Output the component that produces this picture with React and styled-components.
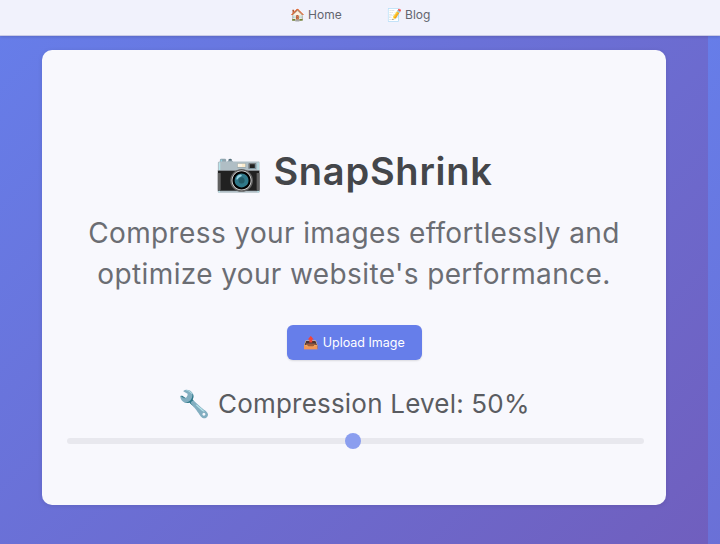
import React from 'react'
import styled, { createGlobalStyle } from 'styled-components'

const Global = createGlobalStyle`
  html, body {
    margin: 0;
    padding: 0;
  }
  body {
    height: 544px;
    overflow: hidden;
    font-family: "Inter", "Noto Sans", sans-serif;
    background: linear-gradient(135deg, #667eea 0%, #764ba2 100%) 0 0 / 708px 1340px repeat-x;
  }
`

const Nav = styled.nav`
  height: 36px;
  background: #f1f2fc;
  border-bottom: 1px solid #c9cbe6;
  box-shadow: 0 1px 3px rgba(0, 0, 0, 0.15);
  display: flex;
  justify-content: center;
  align-items: center;
  gap: 45px;
  padding-bottom: 6px;
  box-sizing: border-box;
`

const NavLink = styled.a`
  font-size: 12px;
  color: #63666f;
  text-decoration: none;
`

const Main = styled.main`
  padding: 14px 54px 0 42px;
`

const Card = styled.section`
  height: 455px;
  box-sizing: border-box;
  padding: 96px 24px 0;
  background: #f8f8fd;
  border-radius: 10px;
  box-shadow: 0 1px 5px rgba(0, 0, 0, 0.1);
  display: flex;
  flex-direction: column;
  align-items: center;
`

const Title = styled.h1`
  margin: 0;
  font-size: 38px;
  line-height: 50px;
  font-weight: 600;
  letter-spacing: 0.75px;
  color: #44464a;
`

const Lead = styled.p`
  margin: 17px 0 0;
  font-size: 28px;
  line-height: 41px;
  font-weight: 400;
  letter-spacing: 0.38px;
  color: #6b6d73;
  text-align: center;
  white-space: nowrap;
`

const UploadButton = styled.button`
  margin-top: 30px;
  width: 135px;
  height: 35px;
  border: none;
  border-radius: 6px;
  background: #667eea;
  color: #fff;
  font-family: inherit;
  font-size: 12.5px;
  box-shadow: 0 1px 2px rgba(0, 0, 0, 0.12);
`

const Level = styled.h2`
  margin: 25px 0 0;
  font-size: 26px;
  line-height: 38px;
  font-weight: 400;
  letter-spacing: 0.2px;
  color: #5a5c61;
`

const Slider = styled.input`
  appearance: none;
  display: block;
  align-self: flex-start;
  margin: 15px 0 0 1px;
  width: 577px;
  height: 6px;
  border-radius: 3px;
  background: #e8e8ee;

  &::-webkit-slider-thumb {
    appearance: none;
    width: 16px;
    height: 16px;
    border-radius: 50%;
    background: #8b9eef;
  }
`

export default function App() {
  return (
    <>
      <Global />
      <Nav>
        <NavLink href="#">🏠 Home</NavLink>
        <NavLink href="#">📝 Blog</NavLink>
      </Nav>
      <Main>
        <Card>
          <Title>📷 SnapShrink</Title>
          <Lead>
            Compress your images effortlessly and
            <br />
            optimize your website's performance.
          </Lead>
          <UploadButton>📤 Upload Image</UploadButton>
          <Level>🔧 Compression Level: 50%</Level>
          <Slider type="range" min="0" max="100" step="0.5" defaultValue="49.5" />
        </Card>
      </Main>
    </>
  )
}
